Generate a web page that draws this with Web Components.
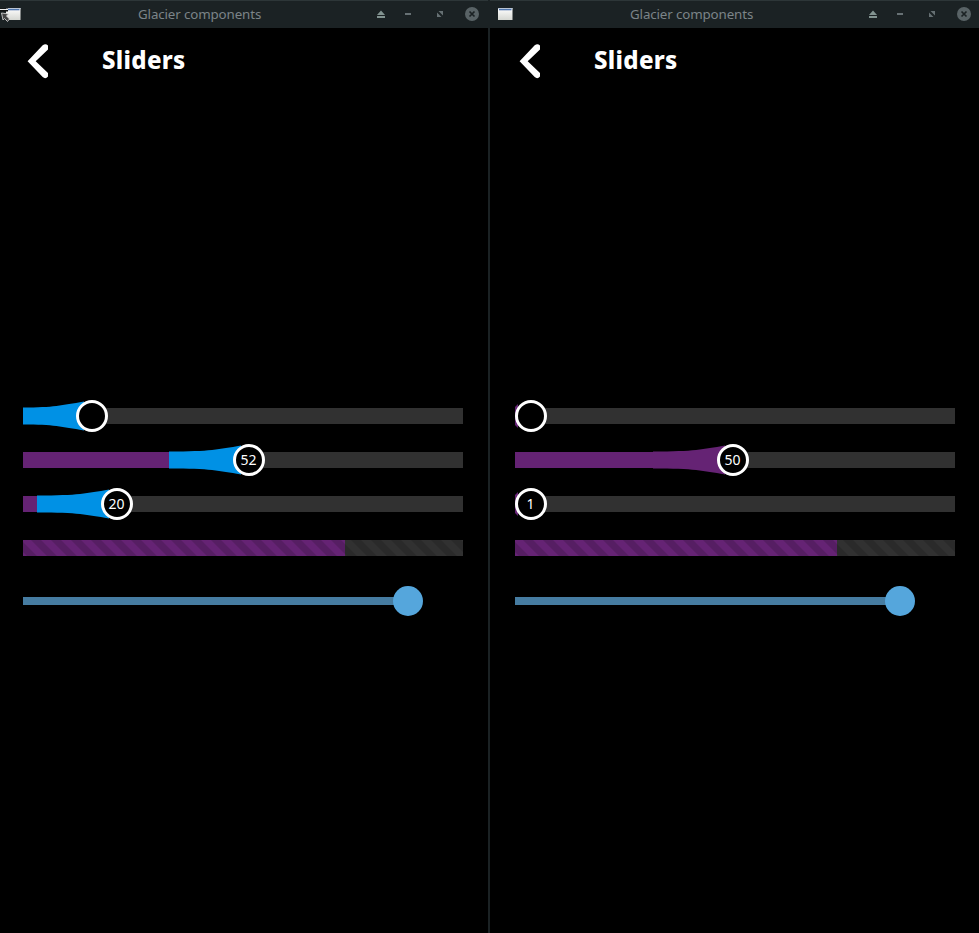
<!DOCTYPE html>
<html lang="en"><head><meta charset="utf-8"><title>Glacier components</title>
<style>
html,body{margin:0;background:#000}
body{width:979px;height:933px;overflow:hidden;font-family:"Noto Sans","Open Sans",sans-serif}
.desktop{display:grid;grid-template-columns:488px 1fr;column-gap:2px;height:933px;background:#1b2224}
.right{--inset:2px}
</style></head><body>
<script>
const define=(name,html,setup)=>customElements.define(name,class extends HTMLElement{
  connectedCallback(){
    if(this.shadowRoot)return;
    const root=this.attachShadow({mode:'open'});
    const t=document.createElement('template');
    t.innerHTML=html;
    root.append(t.content.cloneNode(true));
    if(setup)setup(this,root);
  }
});

define('title-bar',`<style>
:host{display:flex;box-sizing:border-box;height:28px;background:#1b2224;border-top:1px solid #2d3638;align-items:center;padding-left:calc(var(--inset,0px) + 6px);padding-bottom:1px;position:relative}
svg{display:block;flex:none}
.name{margin-left:117px;width:141px;font-size:13.33px;letter-spacing:-.12px;line-height:26px;color:#7b8488;white-space:nowrap}
.buttons{margin-left:91px}
.pointer{position:absolute;left:0;top:6px;display:none}
:host([pointer]) .pointer{display:block}
</style>
<svg width="15" height="12" viewBox="0 0 15 12"><defs><linearGradient id="g" x2="0" y2="1"><stop stop-color="#fff"/><stop offset="1" stop-color="#d5d7d2"/></linearGradient></defs><path fill="url(#g)" d="M0 0h14.500v12H0z"/><path fill="#b9c4d4" d="M0 0h14.500v1H0z"/><path fill="#4d74ad" d="M1 1h12.500v1.300H1z"/></svg>
<span class="name"><slot></slot></span>
<svg class="buttons" width="110" height="26" viewBox="370 1 110 26"><path fill="#829390" d="M377 15l4-4.500 4 4.500zM377 16h8v2h-8z"/><path fill="#677174" d="M405 13h6v2h-6z"/><path fill="#667073" d="M438.500 11h4.500v4.500zM437 12.500v4.500h4.500z"/><circle cx="472" cy="14" r="7" fill="#596366"/><path d="M469.500 11.500l5 5m0-5l-5 5" stroke="#1b2224" stroke-width="1.700"/></svg>
<svg class="pointer" width="14" height="17" viewBox="0 7 14 17"><path d="M0 8.500h8v3H0z" fill="#111"/><path d="M0 9.500h8" stroke="#eee"/><path d="M1.500 13l7 1-2 2 3 3-2 2.500-3-3-1.500 1.500z" fill="#444" stroke="#ddd" stroke-width=".8"/></svg>`);

define('page-header',`<style>
:host{display:flex;height:66px;align-items:center;padding-left:27px}
svg{display:block;flex:none;margin-top:2px}
h1{margin:0 0 0 51px;font-size:24px;line-height:33px;font-weight:800;letter-spacing:.3px;color:#fff;padding-bottom:3px}
</style>
<svg width="24" height="38" viewBox="27 43 24 38"><path d="M27.600 61.300L42.700 45.300Q45.500 42.900 48 45.500V49.500L35.700 61.300 48 73V76.500Q45.500 79.500 42.700 77Z" fill="#fff"/></svg>
<h1><slot></slot></h1>`);

define('glacier-slider',`<style>
:host{display:grid;width:440px;height:44px;align-items:center;position:relative}
.track{height:16px;background:#313131;overflow:hidden}
.fill{height:16px;background:#652374}
svg{position:absolute;inset:0;overflow:visible}
.knob{position:absolute;top:6px;box-sizing:border-box;width:32px;height:32px;border:3px solid #fff;border-radius:50%;background:#000;color:#fff;display:flex;align-items:center;justify-content:center;font-size:14px;line-height:18px;padding-right:1px}
</style>
<div class="track"><div class="fill"></div></div>
<svg width="440" height="44"><path/></svg>
<div class="knob"><slot></slot></div>`,(el,root)=>{
  const c=+el.getAttribute('pos'),raw=c-80,s=Math.max(0,raw);
  root.querySelector('.fill').style.width=c+'px';
  root.querySelector('.knob').style.left=(c-16)+'px';
  const p=root.querySelector('path');
  p.setAttribute('fill',el.hasAttribute('active')?'#0091e5':'#652374');
  const d=c<30?'M0 13L3 10V34L0 31Z':`M${s} 13.600C${raw+42} 13.600 ${c-31} 11.500 ${c-8} 7.600V36.400C${c-31} 32.500 ${raw+42} 30.400 ${s} 30.400Z`;
  p.setAttribute('d',d);
});

define('stripe-progress',`<style>
:host{display:block;width:440px;height:16px;margin-top:14px;position:relative;background:linear-gradient(90deg,#652374 322px,#313131 322px)}
svg{display:block}
</style>
<svg width="440" height="16"><defs><pattern id="s" width="20" height="16" patternUnits="userSpaceOnUse"><path d="M8 0H18L34 16H24ZM-12 0H-2L14 16H4Z" fill="#000" fill-opacity=".15"/></pattern></defs><rect width="440" height="16" fill="url(#s)"/></svg>`);

define('brightness-slider',`<style>
:host{display:flex;align-items:center;width:400px;height:30px;margin-top:30px}
.line{flex:1;height:8px;background:#467ca1;margin-right:-15px}
.dot{width:30px;height:30px;border-radius:50%;background:#55a6dc;flex:none}
</style><div class="line"></div><div class="dot"></div>`);

define('app-window',`<style>
:host{display:flex;flex-direction:column;background:#000;min-width:0;overflow:hidden}
.page{padding-left:var(--inset,0px)}
.body{padding:300px 0 0 23px}
</style>
<slot name="bar"></slot><div class="page"><slot name="header"></slot><div class="body"><slot></slot></div></div>`);
</script>
<div class="desktop">
<app-window><title-bar slot="bar" pointer>Glacier components</title-bar><page-header slot="header">Sliders</page-header>
<glacier-slider pos="69" active></glacier-slider><glacier-slider pos="226" active>52</glacier-slider><glacier-slider pos="94" active>20</glacier-slider>
<stripe-progress></stripe-progress><brightness-slider></brightness-slider></app-window>
<app-window class="right"><title-bar slot="bar">Glacier components</title-bar><page-header slot="header">Sliders</page-header>
<glacier-slider pos="16"></glacier-slider><glacier-slider pos="218">50</glacier-slider><glacier-slider pos="16">1</glacier-slider>
<stripe-progress></stripe-progress><brightness-slider></brightness-slider></app-window>
</div>
</body></html>
